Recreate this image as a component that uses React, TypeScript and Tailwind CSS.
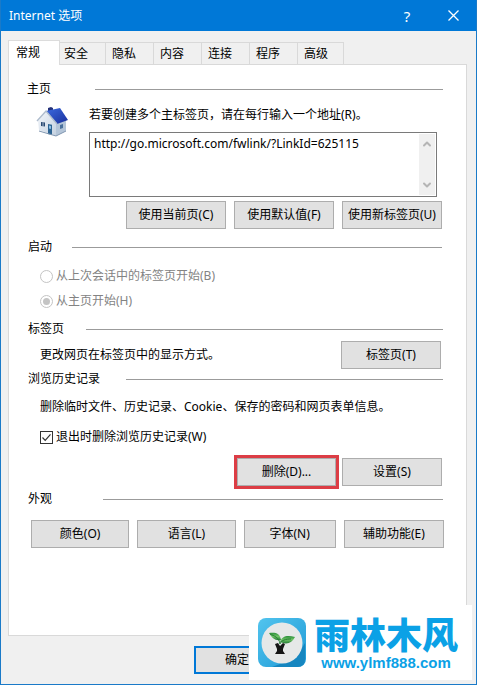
import React from "react";
import { ChevronDown, ChevronUp } from "lucide-react";

const tabs = ["安全", "隐私", "内容", "连接", "程序", "高级"];

function Heading({ text, gap }: { text: string; gap: string }) {
  return (
    <div className="flex h-4 items-center">
      <h2>{text}</h2>
      <div className={`h-px flex-1 bg-[#9b9b9b] ${gap}`} />
    </div>
  );
}

function PushButton({
  children,
  className = "w-[100px]",
}: {
  children: React.ReactNode;
  className?: string;
}) {
  return (
    <button
      type="button"
      className={`h-7 shrink-0 whitespace-nowrap border border-[#adadad] bg-[#e1e1e1] text-center ${className}`}
    >
      {children}
    </button>
  );
}

function HouseIcon() {
  return (
    <svg width="34" height="32" viewBox="0 0 34 32" className="shrink-0">
      <defs>
        <linearGradient id="roof" x1="0" y1="0" x2="1" y2="1">
          <stop offset="0" stopColor="#3c6be0" />
          <stop offset="1" stopColor="#1a2f9c" />
        </linearGradient>
        <linearGradient id="wall" x1="0" y1="0" x2="1" y2="1">
          <stop offset="0" stopColor="#f4f7fb" />
          <stop offset="1" stopColor="#c3d0df" />
        </linearGradient>
      </defs>
      <path d="M2 14 10 4l11 13-1 12L3 23Z" fill="url(#wall)" />
      <path d="m20 16 10-3v11l-10 5Z" fill="#b4c5d8" />
      <path d="M12 4V1l3-1 2 1v4Z" fill="#25327a" />
      <path d="M10 4 24 1l8 12-11 4Z" fill="url(#roof)" />
      <path d="M1 14 10 4l11 13" fill="none" stroke="#aebccd" strokeWidth="1.400" />
      <path d="m5 15 4 .6v4L5 19Z" fill="#2b4a73" />
      <path d="M7 15.400v4" stroke="#dfe8f2" strokeWidth=".7" />
      <path d="m12 17 4 .7V28l-4-1Z" fill="#2d6493" />
      <path d="m13 18.500 2 .4v3l-2-.3Z" fill="#8fc0e4" />
      <path d="m24 18 3-1v4l-3 1Z" fill="#4a719c" />
      <path d="m3 24 17 5 10-5" fill="none" stroke="#8096b0" />
    </svg>
  );
}

function LeafLogo() {
  return (
    <svg width="48" height="49" viewBox="0 0 48 49" className="shrink-0">
      <defs>
        <linearGradient id="tile" x1="0" y1="0" x2="1" y2="1">
          <stop offset="0" stopColor="#52c4ee" />
          <stop offset="1" stopColor="#1f9ad6" />
        </linearGradient>
        <linearGradient id="leaf" x1="0" y1="0" x2="0" y2="1">
          <stop offset="0" stopColor="#2c8f3b" />
          <stop offset=".5" stopColor="#6fc465" />
          <stop offset="1" stopColor="#237a35" />
        </linearGradient>
      </defs>
      <rect width="48" height="49" rx="8" fill="url(#tile)" />
      <path d="m38 40 9-15v16q0 8-8 8H14Z" fill="#1686c0" />
      <circle cx="24" cy="25" r="20.500" fill="#e6e8e8" />
      <path d="M11 15c6-1 11 0 12 7-6 1-9-2-12-7Z" fill="url(#leaf)" />
      <path d="M22 24c2-6 7-7 15-5-3 6-8 8-15 5Z" fill="url(#leaf)" />
      <path d="M12 16c4 2 9 3 10 10 1-4 6-5 11-5" fill="none" stroke="#287d37" />
      <path d="m17 26 3-1 2 3 3-3 2 1-2 5v2l2 3H17l2-3v-2Z" fill="#151515" />
    </svg>
  );
}

export default function App() {
  return (
    <div className="relative border border-t-0 border-[#1a7ac8] bg-[#f0f0f0] font-['Noto_Sans','Noto_Sans_CJK_SC',sans-serif] text-[12px] leading-4 text-black">
      <header className="flex h-[31px] items-center bg-[#0078d7] pl-2 text-white">
        <h1 className="flex-1">Internet 选项</h1>
        <button type="button" aria-label="帮助" className="w-[46px] text-[15px]">
          ?
        </button>
        <button type="button" aria-label="关闭" className="flex w-[46px] justify-center">
          <svg width="11" height="11" viewBox="0 0 11 11">
            <path d="m.5.5 10 10m0-10-10 10" stroke="#fff" strokeWidth="1.300" />
          </svg>
        </button>
      </header>

      <main className="pt-[9px] pr-[9px] pb-[10px] pl-[7px]">
        <nav className="flex items-end">
          <button
            type="button"
            className="relative z-10 -mb-px h-[25px] w-[52px] border border-b-0 border-[#dcdcdc] bg-white pl-[7px] text-left"
          >
            常规
          </button>
          {tabs.map((tab) => (
            <button
              key={tab}
              type="button"
              className="h-[22px] w-12 border-t border-r border-[#d9d9d9] text-left nth-[2]:w-[46px] nth-[2]:pl-1 nth-[n+3]:pl-[6px] last:w-[46px]"
            >
              {tab}
            </button>
          ))}
        </nav>

        <div className="border border-[#d9d9d9] bg-white pt-4 pb-[87px]">
          <section className="pr-[23px] pl-[18px]">
            <Heading text="主页" gap="ml-11" />
            <div className="flex gap-[19px] pt-[10px] pr-[6px] pl-[9px]">
              <HouseIcon />
              <div className="min-w-0 flex-1">
                <label htmlFor="home" className="block whitespace-nowrap">
                  若要创建多个主标签页，请在每行输入一个地址(R)。
                </label>
                <div className="mt-[9px] flex h-[65px] border border-[#7a7a7a]">
                  <textarea
                    id="home"
                    className="min-w-0 flex-1 resize-none overflow-hidden px-1 py-[3px] text-[12px] leading-4 outline-none"
                    defaultValue="http://go.microsoft.com/fwlink/?LinkId=625115"
                  />
                  <div className="my-px mr-px flex w-4 flex-col items-center justify-between bg-[#f0f0f0] py-1 text-[#b5b5b5]">
                    <ChevronUp size={12} strokeWidth={4} />
                    <ChevronDown size={12} strokeWidth={4} />
                  </div>
                </div>
              </div>
            </div>
            <div className="flex justify-end gap-2 pt-1 pr-px">
              <PushButton>使用当前页(C)</PushButton>
              <PushButton>使用默认值(F)</PushButton>
              <PushButton>使用新标签页(U)</PushButton>
            </div>
          </section>

          <section className="pt-[10px] pr-[24px] pl-[19px]">
            <Heading text="启动" gap="ml-5" />
            <div className="flex flex-col gap-[9px] pt-[13px] pl-3 text-[#838383]">
              <label className="flex items-center gap-[3px]">
                <input
                  type="radio"
                  name="startup"
                  disabled
                  className="size-[13px] appearance-none rounded-full border border-[#c4c4c4]"
                />
                从上次会话中的标签页开始(B)
              </label>
              <label className="flex items-center gap-[3px]">
                <input
                  type="radio"
                  name="startup"
                  disabled
                  defaultChecked
                  className="size-[13px] appearance-none rounded-full border border-[#c4c4c4] bg-[#c4c4c4] bg-clip-content p-[2px]"
                />
                从主页开始(H)
              </label>
            </div>
          </section>

          <section className="pt-3 pr-[23px] pl-[19px]">
            <Heading text="标签页" gap="ml-[22px]" />
            <div className="flex items-center justify-between pt-1 pr-[2px] pl-3">
              <p>更改网页在标签页中的显示方式。</p>
              <PushButton>标签页(T)</PushButton>
            </div>
          </section>

          <section className="pt-[2px] pr-[23px] pl-[19px]">
            <Heading text="浏览历史记录" gap="ml-[26px]" />
            <p className="pt-3 pl-3 whitespace-nowrap">
              删除临时文件、历史记录、Cookie、保存的密码和网页表单信息。
            </p>
            <label className="flex items-center gap-[3px] pt-[14px] pl-3">
              <span className="relative size-[13px]">
                <input
                  type="checkbox"
                  defaultChecked
                  className="peer block size-[13px] appearance-none border border-[#333]"
                />
                <svg
                  viewBox="0 0 13 13"
                  className="pointer-events-none absolute inset-0 hidden peer-checked:block"
                >
                  <path d="m2.500 6.500 2.700 2.800 5.300-6" fill="none" stroke="#333" strokeWidth="1.200" />
                </svg>
              </span>
              退出时删除浏览历史记录(W)
            </label>
            <div className="flex justify-end gap-[6px] pt-[13px] pr-px">
              <PushButton className="w-[99px] ring-3 ring-[#dc3d45]">删除(D)...</PushButton>
              <PushButton>设置(S)</PushButton>
            </div>
          </section>

          <section className="pt-[5px] pr-[23px] pl-[19px]">
            <Heading text="外观" gap="ml-[51px]" />
          </section>
          <div className="grid grid-cols-[98fr_98fr_92fr_100fr] gap-2 px-[22px] pt-[13px]">
            <PushButton className="w-full">颜色(O)</PushButton>
            <PushButton className="w-full">语言(L)</PushButton>
            <PushButton className="w-full">字体(N)</PushButton>
            <PushButton className="w-full">辅助功能(E)</PushButton>
          </div>
        </div>

        <button
          type="button"
          className="mt-[10px] ml-[186px] block h-7 w-[86px] border-2 border-[#0078d7] bg-[#e1e1e1]"
        >
          确定
        </button>
      </main>

      <div className="absolute right-1 bottom-1 flex h-[75px] w-[223px] items-center gap-[8px] bg-white pl-[9px] text-[#0ba1e6]">
        <LeafLogo />
        <div className="flex flex-col items-center gap-1 whitespace-nowrap">
          <p className="font-['Noto_Sans_CJK_SC',sans-serif] text-[36px] leading-9 font-black">
            雨林木风
          </p>
          <p className="font-['Liberation_Sans',sans-serif] text-[15px] leading-4 font-bold">
            www.ylmf888.com
          </p>
        </div>
      </div>
    </div>
  );
}
